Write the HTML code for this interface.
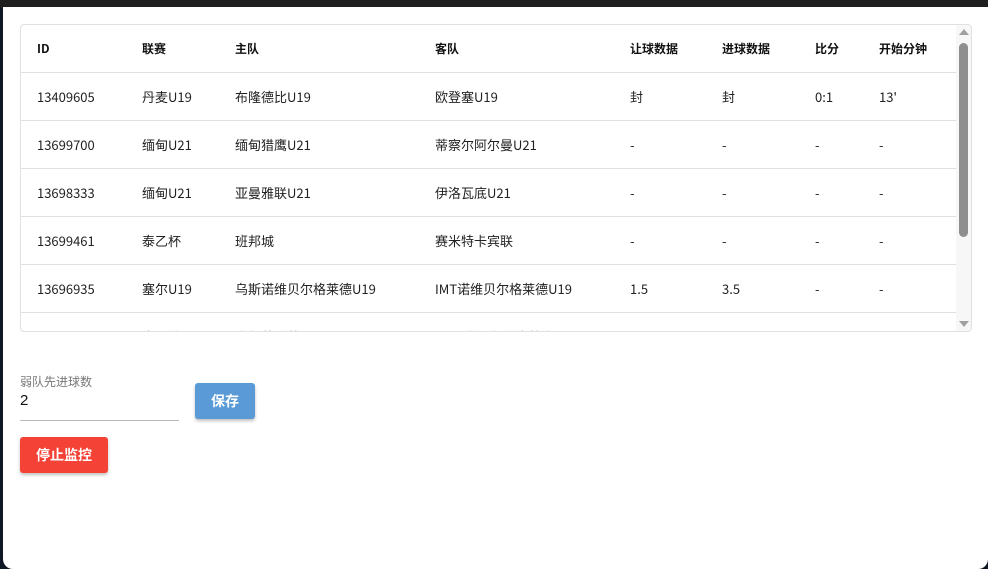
<!DOCTYPE html>
<html><head><meta charset="utf-8"><style>
*{box-sizing:border-box;margin:0;padding:0}
body{width:988px;height:569px;background:#0f1724;overflow:hidden;font-family:"Liberation Sans","Noto Sans CJK SC",sans-serif;position:relative}
.top{position:absolute;left:0;top:0;width:988px;height:8px;background:#1f1f1f}
.page{position:absolute;left:3px;top:7px;width:985px;height:562px;background:#fff;border-radius:0 0 10px 10px}
.tbl{position:absolute;left:20px;top:24px;width:952px;height:308px;border:1px solid #e0e0e0;border-radius:4px;overflow:hidden;background:#fff}
.row{position:absolute;left:0;width:936px;height:48px;border-bottom:1px solid #e0e0e0;font-size:13px;color:#222}
.row span{position:absolute;top:0;line-height:47px;white-space:nowrap;font-family:"Noto Sans CJK SC","Liberation Sans",sans-serif}
.hd span{font-weight:bold;font-size:12px;color:#111}
.sb{position:absolute;left:935px;top:0;width:16px;height:308px;background:#f7f7f7}
.thumb{position:absolute;left:3px;top:18px;width:9px;height:194px;background:#8e8e8e;border-radius:5px}
.up{position:absolute;left:3px;top:4px;width:0;height:0;border-left:5px solid transparent;border-right:5px solid transparent;border-bottom:6px solid #a0a0a0}
.dn{position:absolute;left:3px;top:296px;width:0;height:0;border-left:5px solid transparent;border-right:5px solid transparent;border-top:6px solid #a0a0a0}
.lbl{position:absolute;left:20px;top:373px;font-size:12px;color:#777;font-family:"Noto Sans CJK SC",sans-serif}
.val{position:absolute;left:20px;top:392px;font-size:15px;color:#111}
.ul{position:absolute;left:20px;top:420px;width:159px;height:1px;background:#bbb}
.btn{position:absolute;color:#fff;font-weight:bold;font-size:14px;text-align:center;border-radius:3px;box-shadow:0 2px 3px rgba(0,0,0,.25);font-family:"Noto Sans CJK SC",sans-serif}
</style></head><body>
<div class="top"></div>
<div class="page"></div>
<div class="tbl">
<div class="row hd" style="top:0"><span style="left:16px">ID</span><span style="left:121px">联赛</span><span style="left:214px">主队</span><span style="left:414px">客队</span><span style="left:609px">让球数据</span><span style="left:701px">进球数据</span><span style="left:794px">比分</span><span style="left:858px">开始分钟</span></div>
<div class="row" style="top:48px"><span style="left:16px">13409605</span><span style="left:121px">丹麦U19</span><span style="left:214px">布隆德比U19</span><span style="left:414px">欧登塞U19</span><span style="left:609px">封</span><span style="left:701px">封</span><span style="left:794px">0:1</span><span style="left:858px">13'</span></div>
<div class="row" style="top:96px"><span style="left:16px">13699700</span><span style="left:121px">缅甸U21</span><span style="left:214px">缅甸猎鹰U21</span><span style="left:414px">蒂察尔阿尔曼U21</span><span style="left:609px">-</span><span style="left:701px">-</span><span style="left:794px">-</span><span style="left:858px">-</span></div>
<div class="row" style="top:144px"><span style="left:16px">13698333</span><span style="left:121px">缅甸U21</span><span style="left:214px">亚曼雅联U21</span><span style="left:414px">伊洛瓦底U21</span><span style="left:609px">-</span><span style="left:701px">-</span><span style="left:794px">-</span><span style="left:858px">-</span></div>
<div class="row" style="top:192px"><span style="left:16px">13699461</span><span style="left:121px">泰乙杯</span><span style="left:214px">班邦城</span><span style="left:414px">赛米特卡宾联</span><span style="left:609px">-</span><span style="left:701px">-</span><span style="left:794px">-</span><span style="left:858px">-</span></div>
<div class="row" style="top:240px"><span style="left:16px">13696935</span><span style="left:121px">塞尔U19</span><span style="left:214px">乌斯诺维贝尔格莱德U19</span><span style="left:414px">IMT诺维贝尔格莱德U19</span><span style="left:609px">1.5</span><span style="left:701px">3.5</span><span style="left:794px">-</span><span style="left:858px">-</span></div>
<div class="row" style="top:288px"><span style="left:16px">13696936</span><span style="left:121px">卢旺达U</span><span style="left:214px">赛尔蒂斯蒂亚</span><span style="left:414px">SMS 赛福尔维克拉洛</span></div>
<div class="sb"><div class="up"></div><div class="thumb"></div><div class="dn"></div></div>
</div>
<div class="lbl">弱队先进球数</div>
<div class="val">2</div>
<div class="ul"></div>
<div class="btn" style="left:195px;top:383px;width:60px;height:36px;line-height:36px;background:#5a9ad6">保存</div>
<div class="btn" style="left:20px;top:437px;width:88px;height:36px;line-height:36px;background:#f44336">停止监控</div>
</body></html>
